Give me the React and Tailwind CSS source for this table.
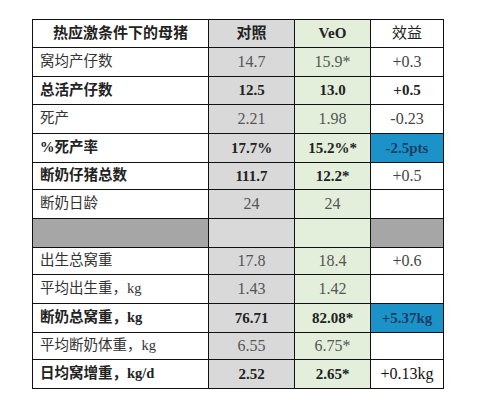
import React from "react";

const rows = [
  { h: "h-[28px]", label: "窝均产仔数", a: "14.7", b: "15.9*", c: "+0.3" },
  { h: "h-[27px]", label: "总活产仔数", a: "12.5", b: "13.0", c: "+0.5", bold: true, cBold: true },
  { h: "h-[28px]", label: "死产", a: "2.21", b: "1.98", c: "-0.23" },
  { h: "h-[28px]", label: "%死产率", a: "17.7%", b: "15.2%*", c: "-2.5pts", bold: true, blue: true },
  { h: "h-[26px]", label: "断奶仔猪总数", a: "111.7", b: "12.2*", c: "+0.5", bold: true },
  { h: "h-[28px]", label: "断奶日龄", a: "24", b: "24", c: "" },
  { h: "h-[28px]", sep: true },
  { h: "h-[26px]", label: "出生总窝重", a: "17.8", b: "18.4", c: "+0.6" },
  { h: "h-[28px]", label: "平均出生重，kg", a: "1.43", b: "1.42", c: "" },
  { h: "h-[28px]", label: "断奶总窝重，kg", a: "76.71", b: "82.08*", c: "+5.37kg", bold: true, blue: true },
  { h: "h-[26px]", label: "平均断奶体重，kg", a: "6.55", b: "6.75*", c: "" },
  { h: "h-[28px]", label: "日均窝增重，kg/d", a: "2.52", b: "2.65*", c: "+0.13kg", bold: true, cDark: true },
];

const font = { fontFamily: '"Liberation Serif", "Noto Sans CJK SC", serif' };

export default function App() {
  return (
    <div className="w-[478px] h-[408px] bg-white pl-[32px] pt-[19px]" style={font}>
      <div className="w-[412px] bg-[#111] border border-[#111] grid grid-cols-[175px_85px_75px_72px] gap-px">
        {/* header */}
        <div className="h-[27px] bg-white flex items-center justify-center font-bold text-[15px] text-[#222]">热应激条件下的母猪</div>
        <div className="h-[27px] bg-[#d9d9d9] flex items-center justify-center font-bold text-[15px] text-[#222]">对照</div>
        <div className="h-[27px] bg-[#e3efda] flex items-center justify-center font-bold text-[15px] text-[#222]">VeO</div>
        <div className="h-[27px] bg-white flex items-center justify-center text-[15px] text-[#222]">效益</div>
        {rows.map((r, i) =>
          r.sep ? (
            <React.Fragment key={i}>
              <div className={`${r.h} bg-[#a6a6a6]`} />
              <div className={`${r.h} bg-[#d9d9d9]`} />
              <div className={`${r.h} bg-[#e3efda]`} />
              <div className={`${r.h} bg-[#a6a6a6]`} />
            </React.Fragment>
          ) : (
            <React.Fragment key={i}>
              <div
                className={`${r.h} bg-white flex items-center pl-[7px] text-[14.5px] ${
                  r.bold ? "font-bold text-[#222]" : "text-[#333]"
                }`}
              >
                {r.label}
              </div>
              <div
                className={`${r.h} bg-[#d9d9d9] flex items-center justify-center ${
                  r.bold ? "font-bold text-[15px] text-[#222]" : "text-[16px] text-[#555]"
                }`}
              >
                {r.a}
              </div>
              <div
                className={`${r.h} bg-[#e3efda] flex items-center justify-center ${
                  r.bold ? "font-bold text-[15px] text-[#222]" : "text-[16px] text-[#555]"
                }`}
              >
                {r.b}
              </div>
              <div
                className={`${r.h} flex items-center justify-center ${
                  r.blue
                    ? "bg-[#1b93c9] font-bold text-[15px] text-[#1f3e66]"
                    : r.cBold
                    ? "bg-white font-bold text-[15px] text-[#222]"
                    : r.cDark
                    ? "bg-white text-[16px] text-[#111]"
                    : "bg-white text-[16px] text-[#444]"
                }`}
              >
                {r.c}
              </div>
            </React.Fragment>
          )
        )}
      </div>
    </div>
  );
}
